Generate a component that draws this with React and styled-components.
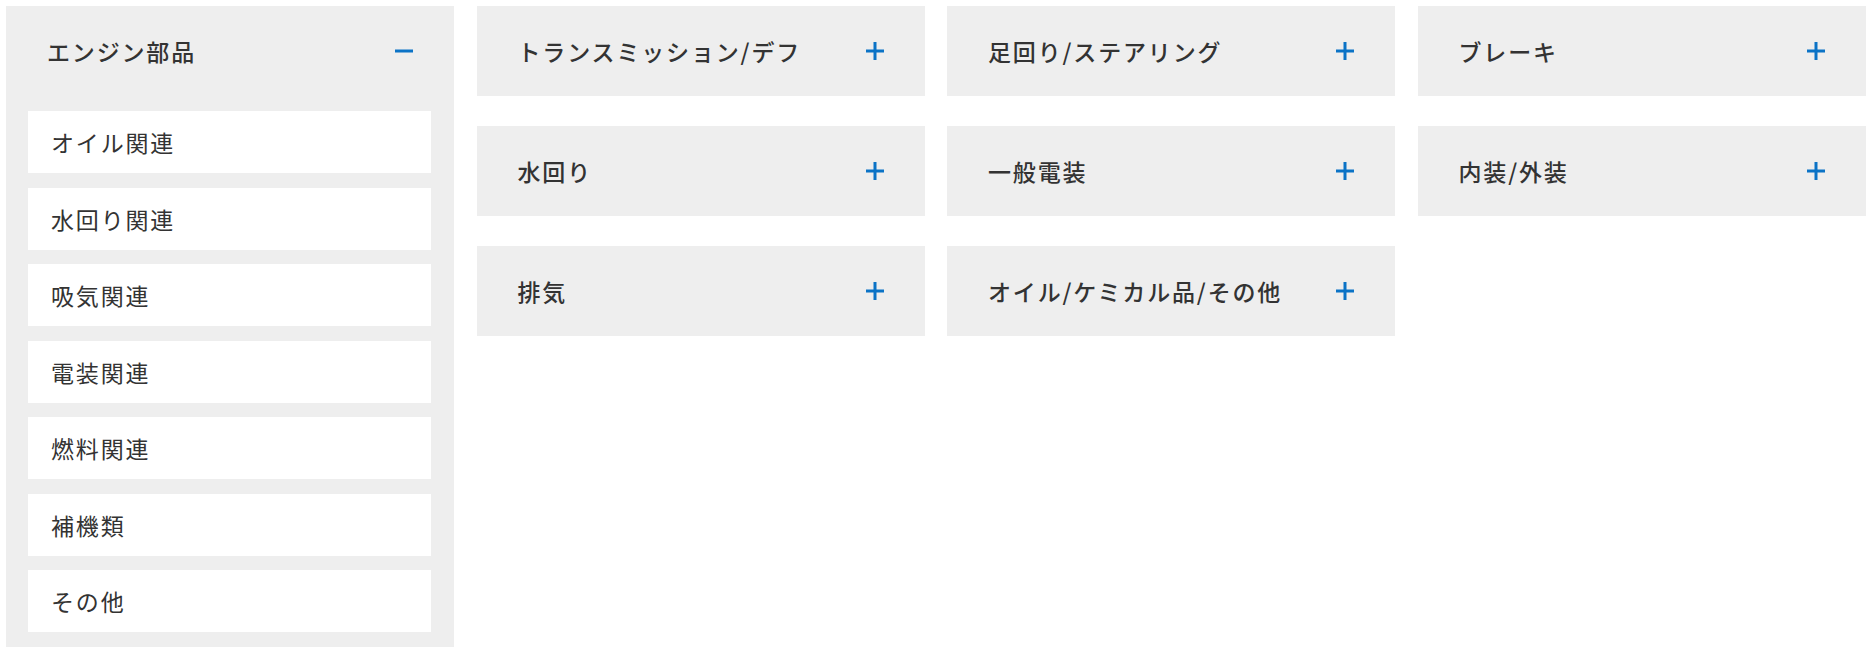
import React from 'react';
import styled, { createGlobalStyle } from 'styled-components';

const GlobalStyle = createGlobalStyle`
    body {
        margin: 0;
        background: #fff;
        font-family: "Noto Sans CJK JP", "Noto Sans", sans-serif;
        color: #333;
    }
`;

const Page = styled.div`
    display: flex;
    align-items: flex-start;
    gap: 22.5px;
    width: 1860px;
    padding: 6px 0 0 6px;
`;

const Panel = styled.div`
    flex: 0 0 448px;
    background: #eeeeee;
    padding-bottom: ${props => (props.open ? '15px' : '0')};
`;

const Header = styled.div`
    display: flex;
    align-items: center;
    justify-content: space-between;
    height: 90px;
    padding: 0 41px 0 41px;
    cursor: pointer;
`;

const Title = styled.span`
    font-size: 23px;
    font-weight: 500;
    letter-spacing: 0.08em;
    line-height: 1;
`;

const SubList = styled.ul`
    list-style: none;
    margin: 15px 0 0;
    padding: 0 23px 0 22px;
    display: flex;
    flex-direction: column;
    gap: 14.5px;
`;

const SubItem = styled.li`
    display: flex;
    align-items: center;
    height: 62px;
    padding-left: 23px;
    background: #fff;
    font-size: 23px;
    letter-spacing: 0.08em;
`;

const Grid = styled.div`
    display: grid;
    grid-template-columns: repeat(3, 448px);
    column-gap: 22.5px;
    row-gap: 30px;
`;

const Toggle = ({ open }) => (
    <svg width="18" height="18" viewBox="0 0 18 18">
        <rect x="0" y="7.5" width="18" height="3" fill="#0b73c6" />
        {!open && <rect x="7.5" y="0" width="3" height="18" fill="#0b73c6" />}
    </svg>
);

const engineParts = ['オイル関連', '水回り関連', '吸気関連', '電装関連', '燃料関連', '補機類', 'その他'];

const categories = [
    'トランスミッション/デフ',
    '足回り/ステアリング',
    'ブレーキ',
    '水回り',
    '一般電装',
    '内装/外装',
    '排気',
    'オイル/ケミカル品/その他'
];

function Category({ name, open, items }) {
    return (
        <Panel open={open}>
            <Header>
                <Title>{name}</Title>
                <Toggle open={open} />
            </Header>
            {open && (
                <SubList>
                    {items.map(item => (
                        <SubItem key={item}>{item}</SubItem>
                    ))}
                </SubList>
            )}
        </Panel>
    );
}

export default function App() {
    return (
        <>
            <GlobalStyle />
            <Page>
                <Category name="エンジン部品" open items={engineParts} />
                <Grid>
                    {categories.map(name => (
                        <Category key={name} name={name} />
                    ))}
                </Grid>
            </Page>
        </>
    );
}
